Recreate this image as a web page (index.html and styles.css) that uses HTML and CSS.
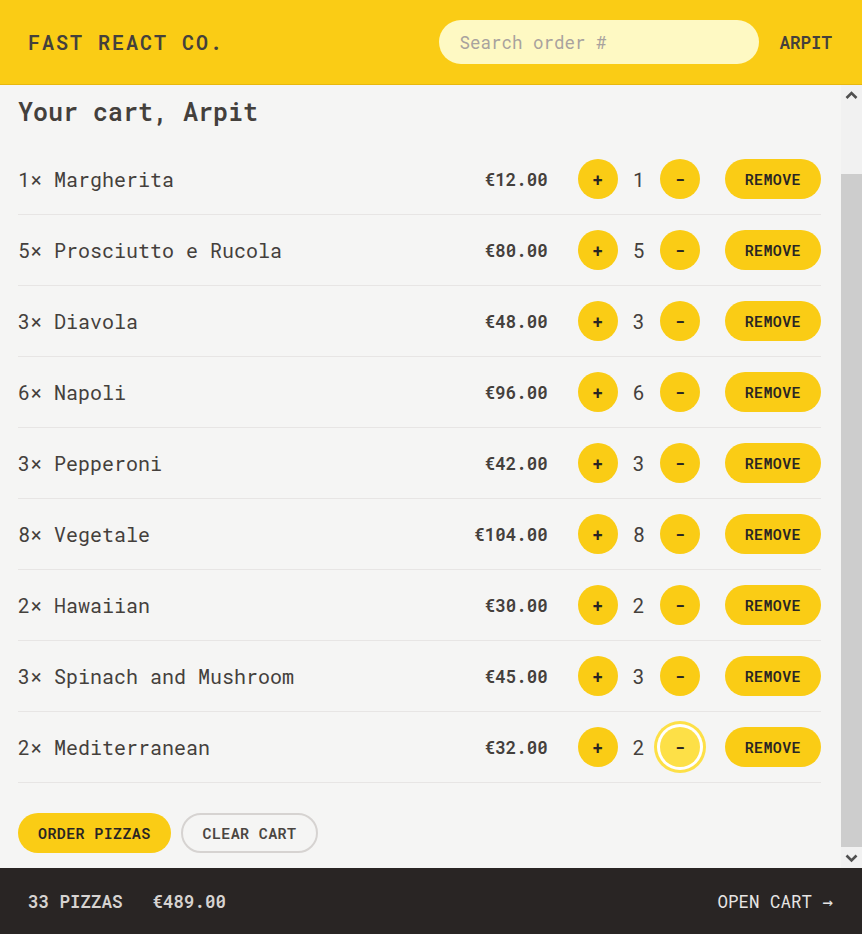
FILE: index.html
```html
<!DOCTYPE html>
<html lang="en">
<head>
<meta charset="utf-8">
<title>Fast React Pizza Co.</title>
<link rel="stylesheet" href="styles.css">
</head>
<body>
<div class="app">
  <header class="header">
    <a class="logo" href="#">Fast React Co.</a>
    <div class="header-right">
      <input class="search" type="text" placeholder="Search order #">
      <span class="username">Arpit</span>
    </div>
  </header>
  <main class="main">
    <div class="scroller">
      <div class="cart">
        <h2 class="cart-title">Your cart, Arpit</h2>
        <ul class="cart-list">
          <li class="cart-item"><p class="item-name">1&times; Margherita</p><div class="item-actions"><p class="price">€12.00</p><div class="qty"><button class="round">+</button><span class="qty-num">1</span><button class="round">-</button></div><button class="small">Remove</button></div></li>
          <li class="cart-item"><p class="item-name">5&times; Prosciutto e Rucola</p><div class="item-actions"><p class="price">€80.00</p><div class="qty"><button class="round">+</button><span class="qty-num">5</span><button class="round">-</button></div><button class="small">Remove</button></div></li>
          <li class="cart-item"><p class="item-name">3&times; Diavola</p><div class="item-actions"><p class="price">€48.00</p><div class="qty"><button class="round">+</button><span class="qty-num">3</span><button class="round">-</button></div><button class="small">Remove</button></div></li>
          <li class="cart-item"><p class="item-name">6&times; Napoli</p><div class="item-actions"><p class="price">€96.00</p><div class="qty"><button class="round">+</button><span class="qty-num">6</span><button class="round">-</button></div><button class="small">Remove</button></div></li>
          <li class="cart-item"><p class="item-name">3&times; Pepperoni</p><div class="item-actions"><p class="price">€42.00</p><div class="qty"><button class="round">+</button><span class="qty-num">3</span><button class="round">-</button></div><button class="small">Remove</button></div></li>
          <li class="cart-item"><p class="item-name">8&times; Vegetale</p><div class="item-actions"><p class="price">€104.00</p><div class="qty"><button class="round">+</button><span class="qty-num">8</span><button class="round">-</button></div><button class="small">Remove</button></div></li>
          <li class="cart-item"><p class="item-name">2&times; Hawaiian</p><div class="item-actions"><p class="price">€30.00</p><div class="qty"><button class="round">+</button><span class="qty-num">2</span><button class="round">-</button></div><button class="small">Remove</button></div></li>
          <li class="cart-item"><p class="item-name">3&times; Spinach and Mushroom</p><div class="item-actions"><p class="price">€45.00</p><div class="qty"><button class="round">+</button><span class="qty-num">3</span><button class="round">-</button></div><button class="small">Remove</button></div></li>
          <li class="cart-item"><p class="item-name">2&times; Mediterranean</p><div class="item-actions"><p class="price">€32.00</p><div class="qty"><button class="round">+</button><span class="qty-num">2</span><button class="round round-focus">-</button></div><button class="small">Remove</button></div></li>
        </ul>
        <div class="cart-buttons">
          <a class="small" href="#">Order pizzas</a>
          <button class="secondary">Clear cart</button>
        </div>
      </div>
    </div>
    <div class="scrollbar" aria-hidden="true">
      <div class="sb-button">
        <svg width="21" height="21" viewBox="0 0 21 21"><path d="M5.5 13 L10.5 8 L15.5 13" fill="none" stroke="#505050" stroke-width="2.6"/></svg>
      </div>
      <div class="sb-track"><div class="sb-thumb"></div></div>
      <div class="sb-button">
        <svg width="21" height="21" viewBox="0 0 21 21"><path d="M5.5 8.5 L10.5 13.5 L15.5 8.5" fill="none" stroke="#505050" stroke-width="2.6"/></svg>
      </div>
    </div>
  </main>
  <footer class="overview">
    <p class="overview-stats"><span>33 pizzas</span><span>€489.00</span></p>
    <a class="open-cart" href="#">Open cart &rarr;</a>
  </footer>
</div>
</body>
</html>
```

FILE: styles.css
```css
* { box-sizing: border-box; }

html, body {
  margin: 0;
  padding: 0;
  height: 100%;
}

body {
  font-family: "Roboto Mono", "DejaVu Sans Mono", "Liberation Mono", monospace;
  color: #44403c;
  background: #f5f5f4;
}

p { margin: 0; }

.app {
  display: grid;
  grid-template-rows: auto 1fr auto;
  height: 100vh;
}

/* Header */
.header {
  height: 85px;
  background: #facc15;
  border-bottom: 1px solid #e8b80e;
  display: flex;
  align-items: center;
  justify-content: space-between;
  padding: 0 30px 0 28px;
}

.logo {
  display: block;
  line-height: 30px;
  color: #44403c;
  text-decoration: none;
  text-transform: uppercase;
  font-weight: 600;
  font-size: 20px;
  letter-spacing: 2px;
}

.header-right {
  display: flex;
  align-items: center;
  gap: 20px;
}

.search {
  width: 320px;
  height: 44px;
  border: none;
  border-radius: 999px;
  background: #fef9c3;
  padding: 0 20px;
  font-family: inherit;
  font-size: 17.5px;
  color: #44403c;
  outline: none;
}

.search::placeholder { color: #a8a29e; }

.username {
  text-transform: uppercase;
  font-weight: 600;
  font-size: 17.5px;
  color: #44403c;
}

/* Main */
.main {
  display: flex;
  min-height: 0;
  background: #f5f5f4;
}

.scroller {
  flex: 1;
  min-width: 0;
  overflow: hidden;
}

.scrollbar {
  width: 21px;
  flex: none;
  display: flex;
  flex-direction: column;
  background: #f1f1f1;
}

.sb-button {
  height: 21px;
  flex: none;
}

.sb-button svg { display: block; }

.sb-track {
  flex: 1;
  display: flex;
  flex-direction: column;
  justify-content: flex-end;
}

.sb-thumb {
  height: 90.8%;
  background: #cdcdcd;
}

.cart {
  padding: 9px 20px 15px 18px;
}

.cart-title {
  margin: 0;
  font-size: 25px;
  line-height: 35px;
  font-weight: 600;
  color: #44403c;
}

.cart-list {
  list-style: none;
  margin: 15px 0 0;
  padding: 0;
}

.cart-item {
  display: flex;
  align-items: center;
  justify-content: space-between;
  padding: 15px 0;
  border-bottom: 1px solid #e7e5e4;
}

.item-name {
  font-size: 20px;
  line-height: 28px;
  color: #44403c;
}

.item-actions {
  display: flex;
  align-items: center;
  gap: 25px;
}

.price {
  font-size: 17.5px;
  font-weight: 600;
  margin-right: 5px;
  color: #44403c;
}

.qty {
  display: flex;
  align-items: center;
  gap: 15px;
}

.qty-num {
  font-size: 20px;
  width: 12px;
  text-align: center;
  color: #44403c;
}

button { font-family: inherit; cursor: pointer; }

.round {
  width: 40px;
  height: 40px;
  border: none;
  border-radius: 50%;
  background: #facc15;
  color: #292524;
  font-size: 17.5px;
  font-weight: 600;
  padding: 0;
}

.round-focus {
  background: #fde047;
  box-shadow: 0 0 0 3px #ffffff, 0 0 0 6px #fde047;
}

.small {
  display: inline-block;
  height: 40px;
  line-height: 40px;
  padding: 0 20px;
  border: none;
  border-radius: 999px;
  background: #facc15;
  color: #292524;
  font-size: 15px;
  font-weight: 600;
  letter-spacing: 0.375px;
  text-transform: uppercase;
  text-decoration: none;
}

.cart-buttons {
  display: flex;
  gap: 10px;
  margin-top: 30px;
}

.secondary {
  height: 40px;
  padding: 0 20px;
  border: 2px solid #d6d3d1;
  border-radius: 999px;
  background: transparent;
  color: #4a4541;
  font-size: 15px;
  font-weight: 600;
  letter-spacing: 0.375px;
  text-transform: uppercase;
}

/* Footer */
.overview {
  height: 66px;
  background: #292524;
  color: #e7e5e4;
  display: flex;
  align-items: center;
  justify-content: space-between;
  padding: 0 29px 0 28px;
  font-size: 17.5px;
  text-transform: uppercase;
}

.overview-stats {
  display: flex;
  gap: 30px;
  font-weight: 600;
  color: #d6d3d1;
}

.open-cart {
  color: #e7e5e4;
  text-decoration: none;
}
```
